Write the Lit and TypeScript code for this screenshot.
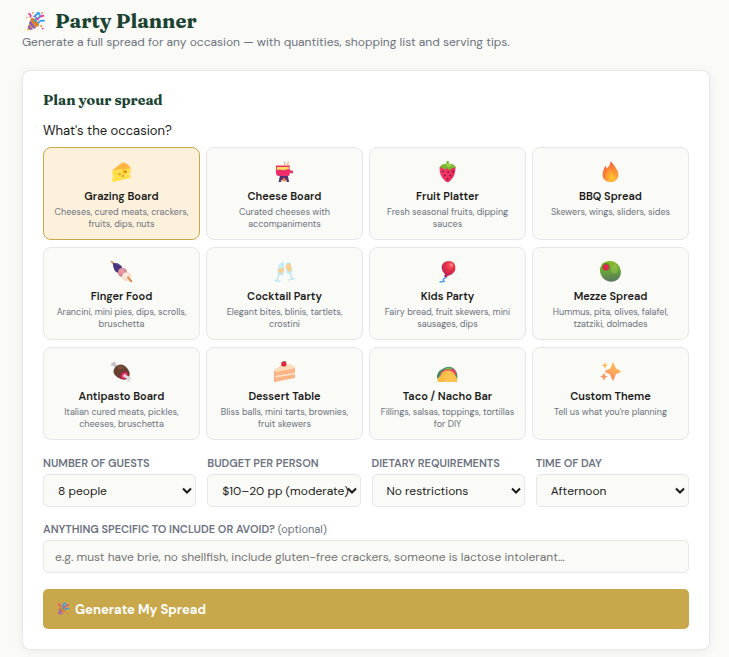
import { LitElement, html, css, svg } from "lit";
import { customElement, property, state } from "lit/decorators.js";
import { classMap } from "lit/directives/class-map.js";

const popper = svg`
  <path d="M3 30 9 11q7 4 12 12Z" fill="#f9a825"/>
  <path d="m6 21 6 7-4 1-4-4Zm2-7 9 12-4 1-7-8Z" fill="#8b5fbf"/>
  <ellipse cx="15" cy="17" rx="3.5" ry="8" transform="rotate(-43 15 17)" fill="#d9822b"/>
  <path d="M14 16q6-4 1-8 4-5 6-3M20 19q2-6 10-4" fill="none" stroke="#2f9bee" stroke-width="2.6"/>
  <path d="M5 4q5 1 3 6M19 14q1-6 10-7" fill="none" stroke="#ee2f8c" stroke-width="2.6"/>
  <path d="M18 4q2-3 4 0t-1 6" fill="none" stroke="#38a8f5" stroke-width="2.4"/>
  <g fill="#f58b3c"><circle cx="12" cy="3" r="1.3"/><circle cx="26" cy="3" r="1.4"/><circle cx="25" cy="23" r="1.6"/><circle cx="3" cy="10" r="1.2"/></g>
  <g fill="#e8399b"><circle cx="27" cy="27" r="1.3"/><circle cx="14" cy="8" r="1.3"/></g>`;

const art: Record<string, unknown> = {
  popper,
  cheese: svg`
    <path d="M2 14 18 2q9 2 12 10Z" fill="#ffb63d"/>
    <path d="M2 14 30 11v6q-3 1-2 4l2 1v4L3 32q-1 0-1-2v-4q2-2 1-4l-1-1Z" fill="#ffe04a"/>
    <ellipse cx="21" cy="16" rx="3.4" ry="3" fill="#f8b51e"/><ellipse cx="22" cy="16.5" rx="2" ry="2.2" fill="#d98b25"/>
    <circle cx="13" cy="20" r="2" fill="#e7a321"/><circle cx="18" cy="23" r="1.5" fill="#d98b25"/>`,
  fondue: svg`
    <path d="M9 22h12l2 10h-4v-3h-8v3H7Z" fill="#553071"/>
    <path d="M3 7h21v7l5 1v4l-5-1v1q0 4-4 4H8q-5 0-5-5Z" fill="#ee2e68"/>
    <path d="M5 9h17q2 0 1 3l-4 1-5 1-5-1-4 1-1-3Z" fill="#ffdc5b"/>
    <path d="M16.500 7V4l-1-3M21 7V4l1-3" fill="none" stroke="#eda36c" stroke-width="1.6"/>
    <path d="m15 25 3 3v3h-5v-3Z" fill="#ff8245"/>`,
  strawberry: svg`
    <path d="M4 9q12-7 24 0 1 13-8 21-4 4-8 0Q3 22 4 9Z" fill="#f43462"/>
    <path d="M16 12q10 0 12-3-1 13-8 21-4 4-8 0 8-2 11-15Z" fill="#d92257" opacity=".55"/>
    <path d="M4 10q2-6 10-6l1-4h3v4q9 0 11 6l-6 1-4 3-3-3-5 2-3-3Z" fill="#79b832"/>
    <path d="M13 5q5-1 10 2l-6 2Z" fill="#a3d44f"/>
    <g fill="#6e1b46"><circle cx="9" cy="16" r="1.3"/><circle cx="17" cy="17" r="1.3"/><circle cx="24" cy="16" r="1.3"/><circle cx="12" cy="22" r="1.3"/><circle cx="20" cy="22" r="1.3"/><circle cx="16" cy="27" r="1.3"/></g>`,
  flame: svg`
    <defs><radialGradient id="fire" cx=".6" cy=".8" r=".75"><stop stop-color="#ffc72f"/><stop offset=".5" stop-color="#ff9634"/><stop offset="1" stop-color="#f1603e"/></radialGradient></defs>
    <path d="M16 0q6 6 9 12 4 5 3 10-2 10-12 10T4 23q-1-6 2-11l2-5 2 4Q16 8 16 0Z" fill="url(#fire)"/>
    <path d="M17 10q6 5 5 12M10 13q-4 6-3 11" fill="none" stroke="#f4673c" stroke-width="1.5" opacity=".6"/>`,
  skewer: svg`
    <path d="m1 1 30 30" stroke="#d98945" stroke-width="2.5" stroke-linecap="round"/>
    <path d="M3 3q8-1 13 5 2 6-2 9-4 2-7-1Q3 12 3 3Z" fill="#48357f"/>
    <path d="M3 3q8-1 13 5Z" fill="#6652a3"/>
    <circle cx="17.500" cy="17.500" r="7" fill="#d88691"/><circle cx="16" cy="15.500" r="4" fill="#e59aa1"/>
    <circle cx="24" cy="24" r="7" fill="#f6dccb"/><circle cx="22" cy="22" r="4" fill="#ffecdf"/>
    <path d="m25 24 6 7" stroke="#d98945" stroke-width="2.5"/>`,
  glasses: svg`
    <path d="m8 4 7-3 1 13q0 7-4 8-6 1-7-5Z" fill="#c3edfb"/><path d="m18 3 6-2 4 12q1 5-4 7-6 0-6-7Z" fill="#c3edfb"/>
    <path d="m6 12 9-2q1 8-4 9-5 0-5-7Z" fill="#f9cf90"/><path d="m17 7 8-4 2 10q-1 4-5 3-3-2-5-9Z" fill="#f9cf90"/>
    <path d="m8 20-4 10M1 30l9 1M24 18l4 9M22 29l9-2" stroke="#b5e5f7" stroke-width="1.9" fill="none"/>`,
  balloon: svg`
    <defs><radialGradient id="bal" cx=".65" cy=".25" r=".8"><stop stop-color="#ff5b62"/><stop offset=".45" stop-color="#e22c43"/><stop offset="1" stop-color="#ac2364"/></radialGradient></defs>
    <path d="M13 22q1 4-2 5t0 4l-7 1" fill="none" stroke="#3d9bf5" stroke-width="2"/>
    <path d="M18 0q10 0 10 11 0 8-12 12l-1 2-4-1 1-4Q7 15 7 10 8 0 18 0Z" fill="url(#bal)"/>
    <ellipse cx="22" cy="6" rx="1.800" ry="2.500" fill="#ff9297"/>`,
  olive: svg`
    <defs><linearGradient id="olv" x1=".4" x2=".5" y2="1"><stop stop-color="#8abb2b"/><stop offset=".5" stop-color="#69a338"/><stop offset="1" stop-color="#587563"/></linearGradient></defs>
    <path d="M13 0q11-1 17 9 5 12-3 19-9 7-19 1Q-1 22 0 11 3 1 13 0Z" fill="url(#olv)"/>
    <ellipse cx="22" cy="12" rx="5" ry="7" fill="#a1cb55" opacity=".45"/>
    <circle cx="9" cy="9" r="6" fill="#658b27"/><circle cx="9" cy="9.500" r="4.700" fill="#df264c"/>`,
  meat: svg`
    <path d="m3 2 3-1 2 4 4 4-4 4-4-5-4-1V4Z" fill="#c7c5ca"/>
    <path d="M8 8q7-6 15 1 7 7 5 14-2 6-8 5Q7 27 4 18q-1-6 4-10Z" fill="#67402f"/>
    <path d="M10 8q6-3 11 3l-9 2Z" fill="#7d523c"/>
    <ellipse cx="20" cy="22" rx="7" ry="5.500" transform="rotate(-40 20 22)" fill="#b9204f"/>
    <ellipse cx="20.500" cy="22.500" rx="4.500" ry="3.500" transform="rotate(-40 20 22)" fill="#ea5376"/>
    <path d="m20 20 8 4 3 1v3l-2 1-1 3h-3l-1-5-6-4Z" fill="#e0dce2"/>`,
  cake: svg`
    <path d="M1 14 14 5q13 0 18 5v16L1 32Z" fill="#fcb583"/>
    <path d="M1 13 14 4q13 0 18 5v2L1 17Z" fill="#fddcb9"/>
    <path d="m1 23 31-5v2L1 25Z" fill="#ffe6d2"/>
    <path d="M1 15v17" stroke="#f6a07c" stroke-width="1.500"/>
    <circle cx="15" cy="4.500" r="4" fill="#dc2942"/><path d="m14 1 4-1 1 2Z" fill="#4b9e48"/>`,
  taco: svg`
    <path d="M0 27q-1-10 7-14 9-7 18-2 7 5 6 16Z" fill="#368f68"/>
    <path d="M10 13q6-5 13-2l-3 6Z" fill="#76b947"/>
    <path d="M22 11q7 2 8 10l-8-2Z" fill="#ef416a"/>
    <path d="M4 25q0-9 8-12 8-2 15 4v7Z" fill="#ef416a"/>
    <path d="M1 32v-6l4-3q2-8 12-9 12 1 14 17l-1 1Z" fill="#f7bd43"/>
    <path d="M10 32q0-12 7-16 10 1 11 14v2Z" fill="#fdc350"/>`,
  sparkles: svg`
    <defs><linearGradient id="spk" x1=".7" x2=".3" y2="1"><stop stop-color="#ffc758"/><stop offset="1" stop-color="#f98663"/></linearGradient></defs>
    <path d="M19 3q1-2 2 0l3 8 7 4q1 1 0 2l-7 3-3 9q-1 2-2 0l-4-9-7-3q-1-1 0-2l8-4Z" fill="url(#spk)"/>
    <path d="m8 2 1 3 3 2-3 1-1 4-2-4-3-1 3-2ZM6 18l2 4 4 2-4 1-2 5-2-5-4-1 4-2Z" fill="url(#spk)"/>`,
};

@customElement("food-icon")
export class FoodIcon extends LitElement {
  static styles = css`
    :host { display: inline-flex; width: 21px; height: 21px; }
    :host([small]) { width: 14px; height: 14px; }
    .art { width: 100%; height: 100%; display: block; overflow: visible; }
  `;
  @property() name = "popper";
  render() {
    return html`<svg class="art" viewBox="0 0 32 32" aria-hidden="true">${art[this.name]}</svg>`;
  }
}

const occasions = [
  ["cheese", "Grazing Board", "Cheeses, cured meats, crackers, fruits, dips, nuts"],
  ["fondue", "Cheese Board", "Curated cheeses with accompaniments"],
  ["strawberry", "Fruit Platter", "Fresh seasonal fruits, dipping sauces"],
  ["flame", "BBQ Spread", "Skewers, wings, sliders, sides"],
  ["skewer", "Finger Food", "Arancini, mini pies, dips, scrolls, bruschetta"],
  ["glasses", "Cocktail Party", "Elegant bites, blinis, tartlets, crostini"],
  ["balloon", "Kids Party", "Fairy bread, fruit skewers, mini sausages, dips"],
  ["olive", "Mezze Spread", "Hummus, pita, olives, falafel, tzatziki, dolmades"],
  ["meat", "Antipasto Board", "Italian cured meats, pickles, cheeses, bruschetta"],
  ["cake", "Dessert Table", "Bliss balls, mini tarts, brownies, fruit skewers"],
  ["taco", "Taco / Nacho Bar", "Fillings, salsas, toppings, tortillas for DIY"],
  ["sparkles", "Custom Theme", "Tell us what you're planning"],
];

const fields = [
  ["guests", "Number of guests", "8 people"],
  ["budget", "Budget per person", "$10–20 pp (moderate)"],
  ["diet", "Dietary requirements", "No restrictions"],
  ["time", "Time of day", "Afternoon"],
];

@customElement("app-root")
export class AppRoot extends LitElement {
  static styles = css`
    :host {
      display: block;
      box-sizing: border-box;
      min-height: 100vh;
      padding: 8px 19px 7px 22px;
      background: #fafaf6;
      color: #1a1a1a;
      font-family: "DM Sans", Inter, "Liberation Sans", sans-serif;
      font-size: 13px;
      line-height: 16px;
    }
    * { box-sizing: border-box; }
    h1, h2, p { margin: 0; }
    h1, h2 {
      font-family: Fraunces, "DejaVu Serif", serif;
      font-weight: 700;
      color: #1b4332;
    }
    h1 {
      display: flex;
      align-items: center;
      gap: 9px;
      padding-left: 3px;
      font-size: 20px;
      line-height: 26px;
    }
    .sub { color: #6b7280; font-size: 12px; }
    .panel {
      margin-top: 20px;
      padding: 20px;
      background: #fff;
      border: 1px solid #e5e7eb;
      border-radius: 8px;
      box-shadow: 0 2px 12px rgba(0, 0, 0, 0.06);
    }
    h2 { font-size: 14px; line-height: 18px; }
    .question { margin: 12px 0 6px; line-height: 20px; }
    .occasions {
      display: grid;
      grid-template-columns: repeat(4, minmax(0, 1fr));
      gap: 7px 6px;
    }
    button, select, input { font-family: inherit; color: inherit; margin: 0; }
    .occasion {
      display: flex;
      flex-direction: column;
      align-items: center;
      padding: 13px 8px 9px;
      border: 1px solid #e5e7eb;
      border-radius: 8px;
      background: #fafaf6;
      cursor: pointer;
    }
    .occasion.chosen { background: #fdf1dc; border-color: #c9a84c; }
    .name { margin-top: 6px; font-size: 11px; line-height: 16px; font-weight: 600; }
    .detail { margin-top: 2px; font-size: 9px; line-height: 12px; color: #6b7280; }
    .fields {
      display: grid;
      grid-template-columns: repeat(4, minmax(0, 1fr));
      gap: 11px;
      margin: 15px 0 14px;
    }
    .field { display: flex; flex-direction: column; gap: 3px; }
    label { font-size: 11px; font-weight: 600; color: #6b7280; }
    .caps { text-transform: uppercase; }
    .optional { font-weight: 400; }
    .picker { position: relative; display: flex; }
    .chevron {
      position: absolute;
      top: 12px;
      right: 4px;
      width: 10px;
      height: 10px;
      pointer-events: none;
      fill: none;
      stroke: #1a1a1a;
      stroke-width: 2;
    }
    select, input {
      width: 100%;
      height: 33px;
      border: 1px solid #e5e7eb;
      border-radius: 5px;
      background: #fafaf6;
      font-size: 12px;
    }
    select { appearance: none; padding: 0 4px 0 14px; }
    input { padding: 0 11px; }
    input::placeholder { color: #757575; }
    .generate {
      display: flex;
      align-items: center;
      gap: 5px;
      width: 100%;
      height: 40px;
      margin-top: 16px;
      padding: 0 13px;
      border: 0;
      border-radius: 5px;
      background: #c9a84c;
      color: #fff;
      font-size: 13px;
      font-weight: 700;
      cursor: pointer;
    }
  `;

  @state() private chosen = "Grazing Board";

  render() {
    return html`
      <header>
        <h1><food-icon name="popper"></food-icon>Party Planner</h1>
        <p class="sub">Generate a full spread for any occasion — with quantities, shopping list and serving tips.</p>
      </header>
      <main class="panel">
        <h2>Plan your spread</h2>
        <p class="question" id="occasion">What's the occasion?</p>
        <div class="occasions" role="group" aria-labelledby="occasion">
          ${occasions.map(([icon, name, detail]) => html`
            <button
              type="button"
              class=${classMap({ occasion: true, chosen: name === this.chosen })}
              aria-pressed=${name === this.chosen}
              @click=${() => (this.chosen = name)}
            >
              <food-icon name=${icon}></food-icon>
              <span class="name">${name}</span>
              <span class="detail">${detail}</span>
            </button>`)}
        </div>
        <div class="fields">
          ${fields.map(([id, label, value]) => html`
            <div class="field">
              <label class="caps" for=${id}>${label}</label>
              <div class="picker">
                <select id=${id}><option>${value}</option></select>
                <svg class="chevron" viewBox="0 0 10 10" aria-hidden="true"><path d="m1 2.500 4 4 4-4"/></svg>
              </div>
            </div>`)}
        </div>
        <div class="field">
          <label for="notes"><span class="caps">Anything specific to include or avoid?</span> <span class="optional">(optional)</span></label>
          <input id="notes" type="text" placeholder="e.g. must have brie, no shellfish, include gluten-free crackers, someone is lactose intolerant…" />
        </div>
        <button type="button" class="generate"><food-icon name="popper" small></food-icon>Generate My Spread</button>
      </main>
    `;
  }
}
